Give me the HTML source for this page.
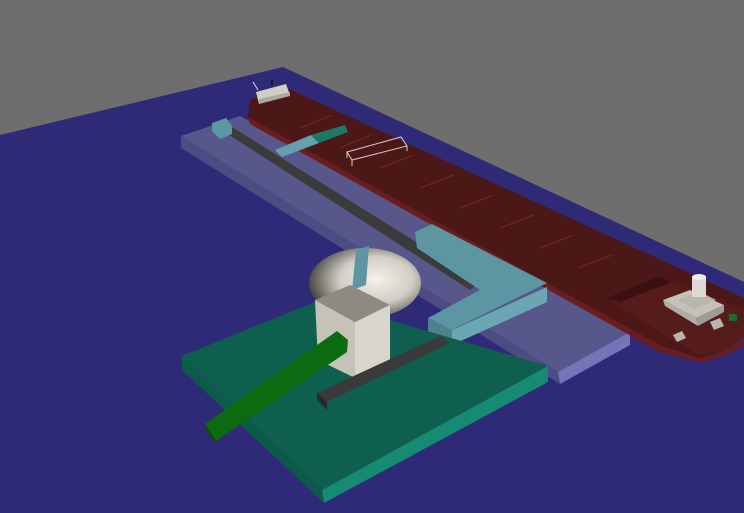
<!DOCTYPE html>
<html><head><meta charset="utf-8"><style>html,body{margin:0;padding:0;background:#6e6e6e;width:744px;height:513px;overflow:hidden}</style></head>
<body>
<svg width="744" height="513" viewBox="0 0 744 513" xmlns="http://www.w3.org/2000/svg">
<defs>
<radialGradient id="dome" cx="0.6" cy="0.45" r="0.6">
<stop offset="0" stop-color="#f4f2ec"/><stop offset="0.55" stop-color="#d0cdc4"/><stop offset="1" stop-color="#4a4945"/>
</radialGradient>
</defs>
<rect width="744" height="513" fill="#6e6e6e"/>
<polygon points="0,135 283,67 744,282 744,513 0,513" fill="#2e2a78"/>
<polygon points="181,136 240,116 630,332 558,372" fill="#57578c"/>
<polygon points="558,372 630,332 630,345 560,384" fill="#7474b6"/>
<polygon points="181,136 558,372 560,384 181,148" fill="#4c4c82"/>
<polygon points="248,117 547,283 660,345 700,358 722,352 744,338 744,345 725,356 700,362 660,352 250,124" fill="#6b1d1d"/>
<polygon points="250,100 287,88 744,298 744,336 725,350 700,358 660,345 547,283 248,117" fill="#4c1717"/>
<polygon points="607,298 660,276 744,310 744,336 725,350 700,356 640,320" fill="#561b1b"/>
<polygon points="607,298 660,276 672,282 620,302" fill="#3a1010"/>
<g stroke="#6e2a24" stroke-width="1">
<line x1="300" y1="128" x2="332" y2="115"/><line x1="340" y1="148" x2="372" y2="135"/>
<line x1="380" y1="168" x2="414" y2="155"/><line x1="420" y1="188" x2="454" y2="175"/>
<line x1="460" y1="208" x2="494" y2="195"/><line x1="500" y1="228" x2="534" y2="215"/>
<line x1="540" y1="248" x2="574" y2="235"/><line x1="578" y1="268" x2="612" y2="255"/>
</g>
<polygon points="256,92 286,84 290,95 259,104" fill="#cfcdc4"/>
<polygon points="259,99 290,92 290,96 259,104" fill="#aaa89f"/>
<line x1="253" y1="82" x2="258" y2="90" stroke="#ddd" stroke-width="1"/>
<line x1="272" y1="85" x2="272" y2="80" stroke="#111" stroke-width="1.5"/>
<polygon points="347,152 401,137 407,146 352,160" fill="none" stroke="#d8cfc8" stroke-width="1"/>
<line x1="347" y1="152" x2="347" y2="158" stroke="#d8cfc8"/><line x1="352" y1="160" x2="352" y2="166" stroke="#d8cfc8"/>
<line x1="407" y1="146" x2="407" y2="151" stroke="#d8cfc8"/>
<polygon points="663,300 690,290 724,305 696,318" fill="#c4c2b8"/>
<polygon points="696,318 724,305 724,312 698,326" fill="#9e9c94"/>
<polygon points="663,300 696,318 698,326 665,306" fill="#b0aea6"/>
<polygon points="678,300 700,292 716,300 694,309" fill="#b8b6ad"/>
<rect x="692" y="277" width="14" height="20" fill="#dcdad2"/>
<ellipse cx="699" cy="277" rx="7" ry="3" fill="#eeece6"/>
<polygon points="710,322 720,318 724,326 714,330" fill="#b8b6ac"/>
<polygon points="673,335 682,331 686,338 677,342" fill="#b8b6ac"/>
<rect x="729" y="314" width="8" height="7" fill="#1e6a2a"/>
<polygon points="223,131 232,127 480,282 470,290" fill="#3b3b3b"/>
<polygon points="212,123 226,118 232,126 232,134 220,139 212,131" fill="#5c97a2"/>
<polygon points="275,150 311,135 319,143 282,157" fill="#62a1ad"/>
<polygon points="311,135 345,125 348,132 319,143" fill="#1a7a66"/>
<polygon points="415,232 432,224 547,283 452,330 428,318 480,290 417,248" fill="#5c96a2"/>
<polygon points="428,318 452,330 547,287 547,302 452,345 428,333" fill="#6aa7b3"/>
<polygon points="428,318 452,330 452,345 428,333" fill="#4d828c"/>
<polygon points="182,356 320,300 548,366 322,490" fill="#0f5f4f"/>
<polygon points="322,490 548,366 548,382 324,503" fill="#168a72"/>
<polygon points="182,356 322,490 324,503 182,370" fill="#0d5a4a"/>
<ellipse cx="365" cy="283" rx="56" ry="35" fill="url(#dome)"/>
<polygon points="356,250 369,246 366,285 352,290" fill="#5c96a2"/>
<polygon points="315,300 350,285 390,305 355,322" fill="#8d8a82"/>
<polygon points="315,300 355,322 355,378 318,360" fill="#c5c2b8"/>
<polygon points="355,322 390,305 390,360 355,378" fill="#d8d5cc"/>
<polygon points="317,393 440,336 450,343 327,402" fill="#3a3a3a"/>
<polygon points="317,393 327,402 327,410 317,400" fill="#2a2a2a"/>
<polygon points="205,424 337,331 348,340 347,352 216,441" fill="#0c6a10"/>
<polygon points="205,424 216,441 214,443 207,432" fill="#084a0a"/>
</svg>
</body></html>
